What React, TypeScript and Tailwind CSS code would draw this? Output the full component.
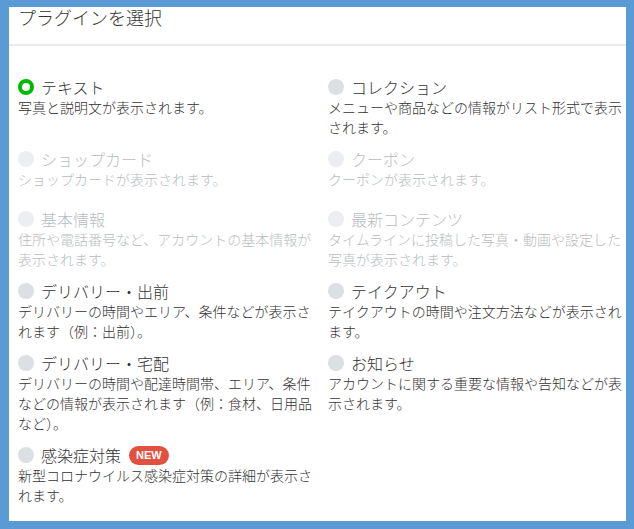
type Plugin = {
  title: string;
  desc: string;
  state: "checked" | "normal" | "disabled";
  badge?: boolean;
};

const plugins: Plugin[] = [
  { title: "テキスト", desc: "写真と説明文が表示されます。", state: "checked" },
  { title: "コレクション", desc: "メニューや商品などの情報がリスト形式で表示されます。", state: "normal" },
  { title: "ショップカード", desc: "ショップカードが表示されます。", state: "disabled" },
  { title: "クーポン", desc: "クーポンが表示されます。", state: "disabled" },
  { title: "基本情報", desc: "住所や電話番号など、アカウントの基本情報が表示されます。", state: "disabled" },
  { title: "最新コンテンツ", desc: "タイムラインに投稿した写真・動画や設定した写真が表示されます。", state: "disabled" },
  { title: "デリバリー・出前", desc: "デリバリーの時間やエリア、条件などが表示されます（例：出前）。", state: "normal" },
  { title: "テイクアウト", desc: "テイクアウトの時間や注文方法などが表示されます。", state: "normal" },
  { title: "デリバリー・宅配", desc: "デリバリーの時間や配達時間帯、エリア、条件などの情報が表示されます（例：食材、日用品など）。", state: "normal" },
  { title: "お知らせ", desc: "アカウントに関する重要な情報や告知などが表示されます。", state: "normal" },
  { title: "感染症対策", desc: "新型コロナウイルス感染症対策の詳細が表示されます。", state: "normal", badge: true },
];

const Radio = ({ state }: { state: Plugin["state"] }) => {
  if (state === "checked") {
    return <span className="w-4 h-4 rounded-full border-[4px] border-[#00b900] bg-white shrink-0" />;
  }
  if (state === "disabled") {
    return <span className="w-4 h-4 rounded-full bg-[#eceef1] shrink-0" />;
  }
  return <span className="w-4 h-4 rounded-full bg-[#dcdfe4] shrink-0" />;
};

const PluginItem = ({ p }: { p: Plugin }) => {
  const off = p.state === "disabled";
  return (
    <div className="min-h-[47px] mb-[13px]">
      <div className={`flex items-center gap-[7px] h-[18px] text-[16px] leading-[18px] font-light ${off ? "text-[#b9bcc0]" : "text-[#333]"}`}>
        <Radio state={p.state} />
        <span>{p.title}</span>
        {p.badge && (
          <span className="ml-[1px] h-[19px] px-[7px] rounded-full bg-[#e2513f] text-white text-[11px] font-bold leading-[19px] font-['Liberation_Sans',sans-serif]">
            NEW
          </span>
        )}
      </div>
      <p className={`text-[14px] leading-[20px] mt-[1px] font-light ${off ? "text-[#b9bcc0]" : "text-[#333]"}`}>{p.desc}</p>
    </div>
  );
};

export default function App() {
  return (
    <div className="w-[634px] h-[529px] bg-[#5b9bd5] pt-[7px] pl-[9px] pr-[8px] pb-[8px] font-['Noto_Sans_CJK_JP',sans-serif] overflow-hidden">
      <div className="bg-white h-full">
        <div className="h-[39px] border-b-2 border-[#e9ebee] pl-[9px]">
          <h1 className="text-[18px] leading-[21px] font-light text-[#333]">プラグインを選択</h1>
        </div>
        <div className="grid grid-cols-[298px_298px] gap-x-3 pl-[9px] pt-[32px]">
          {plugins.map((p) => (
            <PluginItem key={p.title} p={p} />
          ))}
        </div>
      </div>
    </div>
  );
}
